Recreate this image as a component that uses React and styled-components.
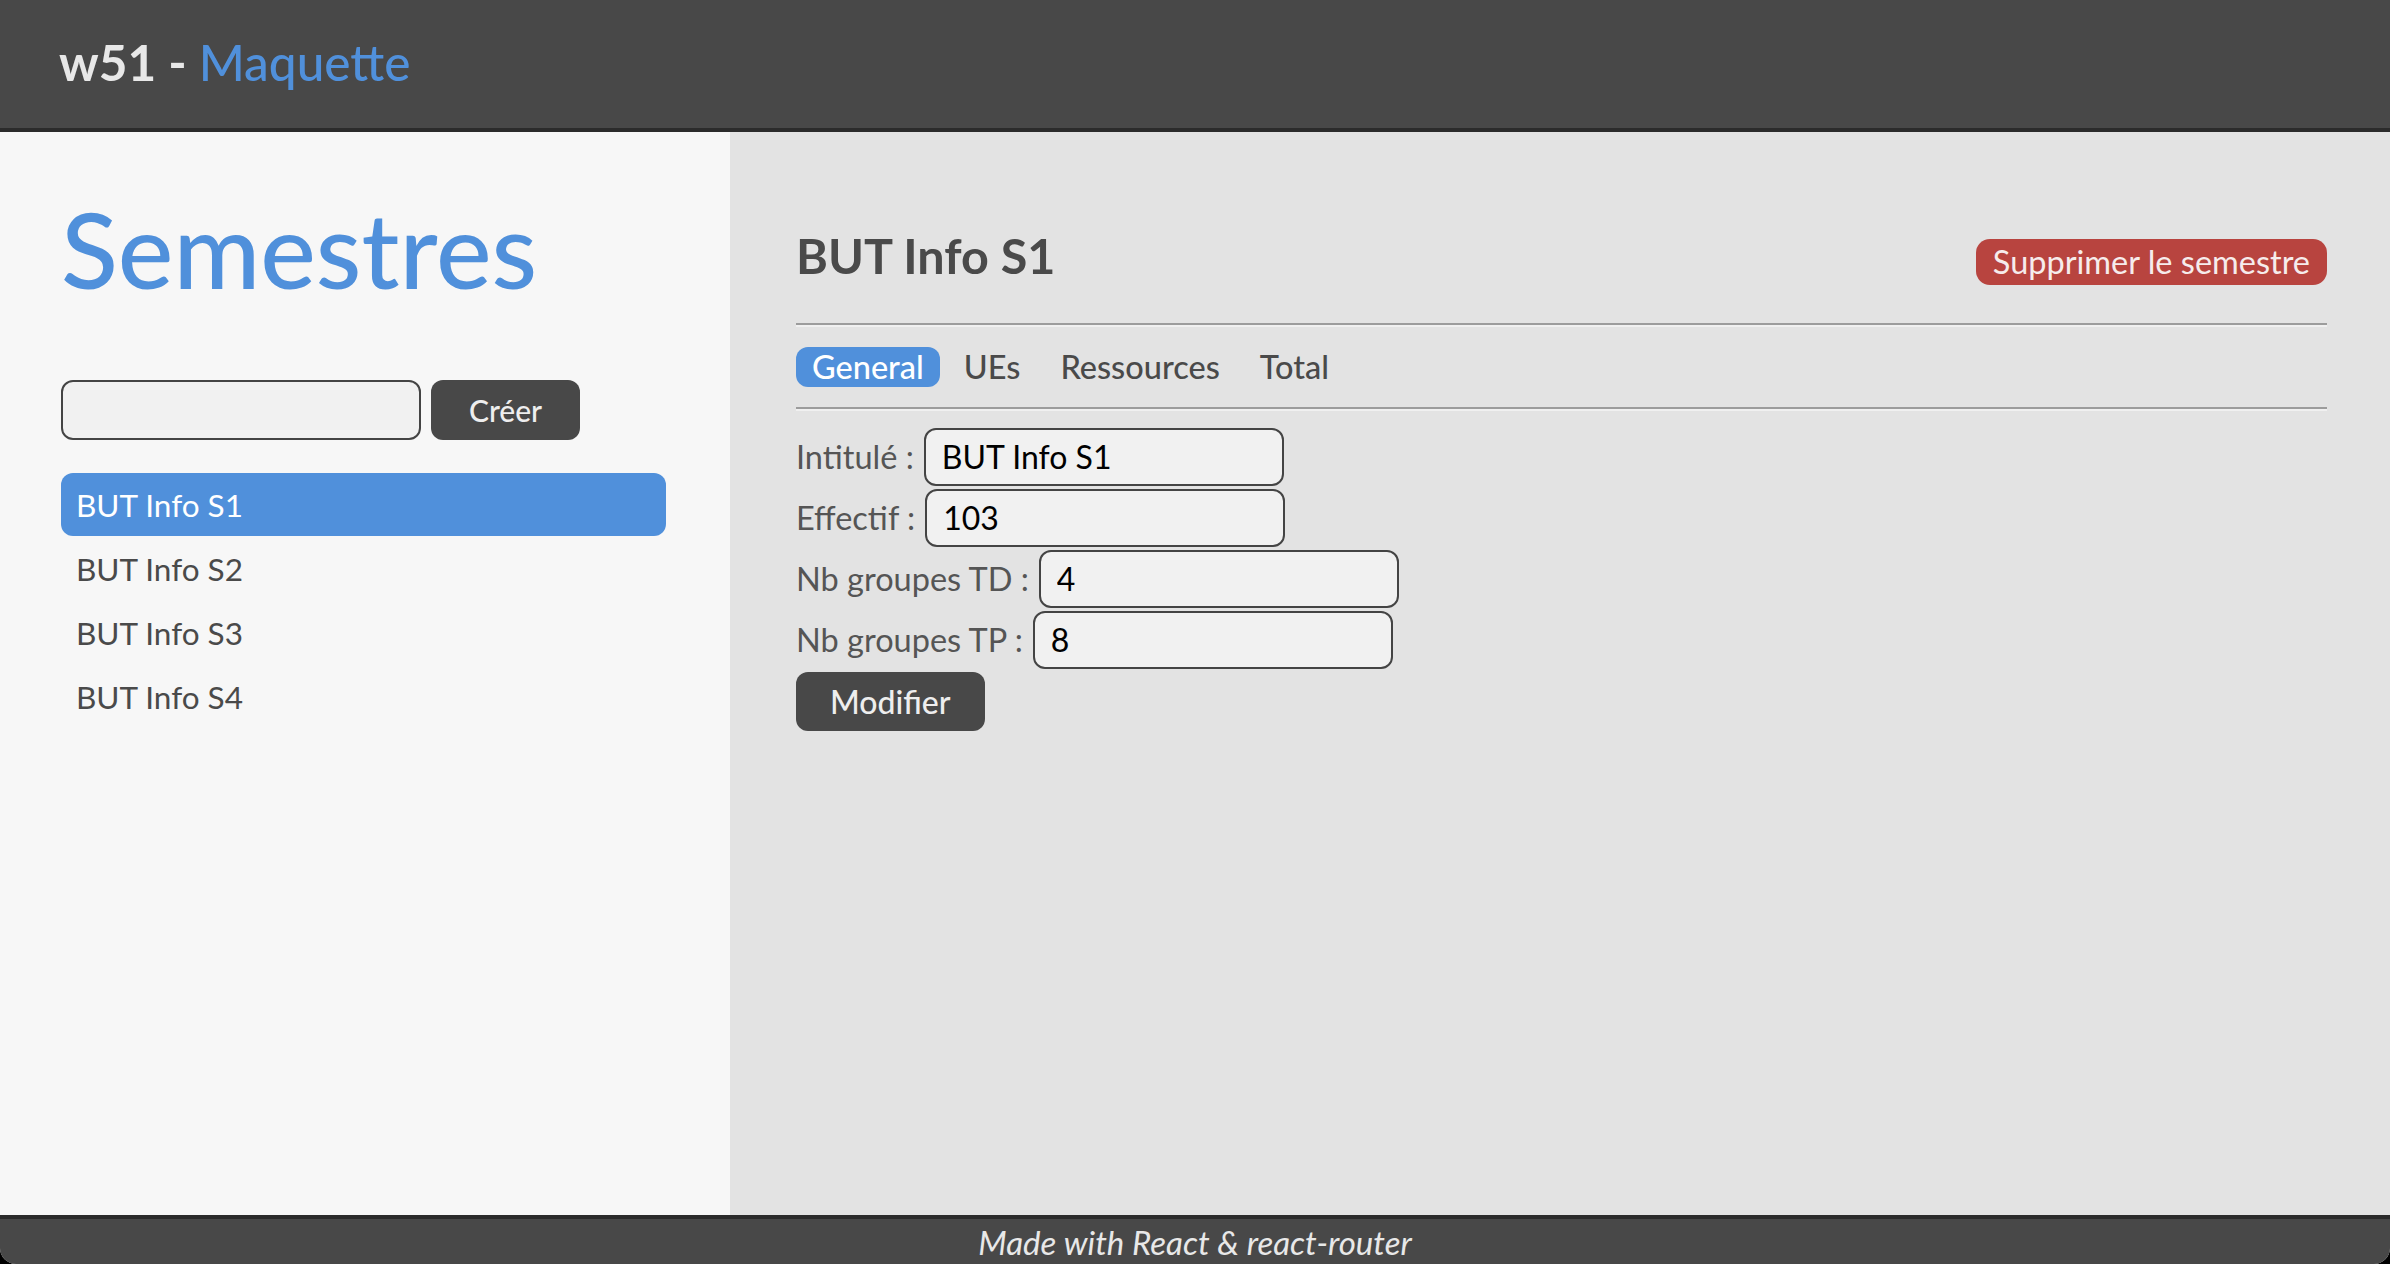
import React, { useState } from 'react';
import styled, { createGlobalStyle } from 'styled-components';

const GlobalStyle = createGlobalStyle`
  html, body {
    margin: 0;
    padding: 0;
    background: #000;
  }
  body {
    font-family: Lato, "Noto Sans", sans-serif;
  }
  * { box-sizing: border-box; }
`;

const BLUE = '#5090db';
const DARK = '#484848';

const Page = styled.div`
  height: 100vh;
  display: flex;
  flex-direction: column;
  border-radius: 0 0 16px 16px;
  overflow: hidden;
  background: #e3e3e3;
`;

const Header = styled.header`
  height: 132px;
  flex-shrink: 0;
  background: ${DARK};
  border-bottom: 4px solid #2b2b2b;
  display: flex;
  align-items: center;
  padding: 0 59px 4px;
`;

const Brand = styled.h1`
  margin: 0;
  font-size: 49.5px;
  font-weight: 700;
  color: #e8e8e8;
  span {
    color: ${BLUE};
    font-weight: 500;
  }
`;

const Body = styled.div`
  flex: 1;
  display: flex;
  min-height: 0;
`;

const Sidebar = styled.aside`
  width: 730px;
  flex-shrink: 0;
  background: #f7f7f7;
  padding: 53px 64px 0 61px;
`;

const BigTitle = styled.h2`
  margin: 0 0 69px;
  font-size: 105px;
  line-height: 1.2;
  font-weight: 500;
  color: ${BLUE};
`;

const CreateRow = styled.div`
  display: flex;
  gap: 10px;
  margin-bottom: 33px;
`;

const TextInput = styled.input`
  width: ${(p) => p.$w || 360}px;
  height: ${(p) => p.$h || 58}px;
  border: 2px solid #444;
  border-radius: 12px;
  background: #f1f1f1;
  font-family: inherit;
  font-size: 32px;
  color: #000;
  padding: 0 16px;
  outline: none;
`;

const DarkButton = styled.button`
  height: ${(p) => p.$h || 60}px;
  padding: 0 ${(p) => p.$pad || 34}px;
  border: none;
  border-radius: 12px;
  background: ${DARK};
  color: #eeeeee;
  font-family: inherit;
  font-size: ${(p) => p.$fs || 30}px;
  font-weight: 500;
  cursor: pointer;
`;

const List = styled.ul`
  list-style: none;
  margin: 0;
  padding: 0;
  width: 605px;
`;

const Item = styled.li`
  height: 63px;
  display: flex;
  align-items: center;
  padding: 0 15px;
  margin-bottom: 1px;
  border-radius: 12px;
  font-size: 31.5px;
  color: ${(p) => (p.$active ? '#fff' : '#4a4a4a')};
  background: ${(p) => (p.$active ? BLUE : 'transparent')};
  cursor: pointer;
`;

const Main = styled.main`
  flex: 1;
  padding: 94px 63px 0 66px;
`;

const HeadRow = styled.div`
  display: flex;
  justify-content: space-between;
  align-items: baseline;
`;

const SemTitle = styled.h3`
  margin: 0;
  font-size: 48.5px;
  line-height: 1.2;
  font-weight: 700;
  color: #4a4a4a;
`;

const DangerButton = styled.button`
  height: 46px;
  padding: 0 17px;
  border: none;
  border-radius: 14px;
  background: #b8443f;
  color: #f6ecec;
  font-family: inherit;
  font-size: 32.5px;
  font-weight: 400;
  cursor: pointer;
`;

const Rule = styled.hr`
  margin: ${(p) => p.$m || '0'};
  border: none;
  border-top: 2px solid #9c9c9c;
  border-bottom: 2px solid #f0f0f0;
  height: 0;
`;

const Tabs = styled.nav`
  display: flex;
  align-items: center;
  gap: 8px;
  height: 40px;
  margin: 20px 0;
`;

const Tab = styled.button`
  height: 40px;
  padding: 0 16px;
  border: none;
  border-radius: 12px;
  background: ${(p) => (p.$active ? BLUE : 'transparent')};
  color: ${(p) => (p.$active ? '#fff' : '#4a4a4a')};
  font-family: inherit;
  font-size: 32.5px;
  font-weight: 500;
  cursor: pointer;
`;

const Form = styled.form`
  margin-top: 17px;
  display: flex;
  flex-direction: column;
  align-items: flex-start;
  gap: 3px;
`;

const Field = styled.label`
  display: flex;
  align-items: center;
  gap: 10px;
  font-size: 32.5px;
  color: #555;
`;

const Footer = styled.footer`
  height: 49px;
  flex-shrink: 0;
  background: ${DARK};
  border-top: 4px solid #2b2b2b;
  display: flex;
  align-items: center;
  justify-content: center;
  font-style: italic;
  font-size: 33px;
  color: #e8e8e8;
`;

const semestres = ['BUT Info S1', 'BUT Info S2', 'BUT Info S3', 'BUT Info S4'];
const tabs = ['General', 'UEs', 'Ressources', 'Total'];

export default function App() {
  const [selected, setSelected] = useState(0);
  const [tab, setTab] = useState(0);

  return (
    <>
      <GlobalStyle />
      <Page>
        <Header>
          <Brand>
            w51 - <span>Maquette</span>
          </Brand>
        </Header>
        <Body>
          <Sidebar>
            <BigTitle>Semestres</BigTitle>
            <CreateRow>
              <TextInput $w={360} $h={60} />
              <DarkButton $pad={38}>Créer</DarkButton>
            </CreateRow>
            <List>
              {semestres.map((s, i) => (
                <Item key={s} $active={i === selected} onClick={() => setSelected(i)}>
                  {s}
                </Item>
              ))}
            </List>
          </Sidebar>
          <Main>
            <HeadRow>
              <SemTitle>{semestres[selected]}</SemTitle>
              <DangerButton>Supprimer le semestre</DangerButton>
            </HeadRow>
            <Rule $m="38px 0 0" />
            <Tabs>
              {tabs.map((t, i) => (
                <Tab key={t} $active={i === tab} onClick={() => setTab(i)}>
                  {t}
                </Tab>
              ))}
            </Tabs>
            <Rule />
            <Form onSubmit={(e) => e.preventDefault()}>
              <Field>
                Intitulé :<TextInput defaultValue={semestres[selected]} />
              </Field>
              <Field>
                Effectif :<TextInput defaultValue="103" />
              </Field>
              <Field>
                Nb groupes TD :<TextInput defaultValue="4" />
              </Field>
              <Field>
                Nb groupes TP :<TextInput defaultValue="8" />
              </Field>
              <DarkButton type="submit" $pad={34} $h={59} $fs={32}>
                Modifier
              </DarkButton>
            </Form>
          </Main>
        </Body>
        <Footer>Made with React &amp; react-router</Footer>
      </Page>
    </>
  );
}
